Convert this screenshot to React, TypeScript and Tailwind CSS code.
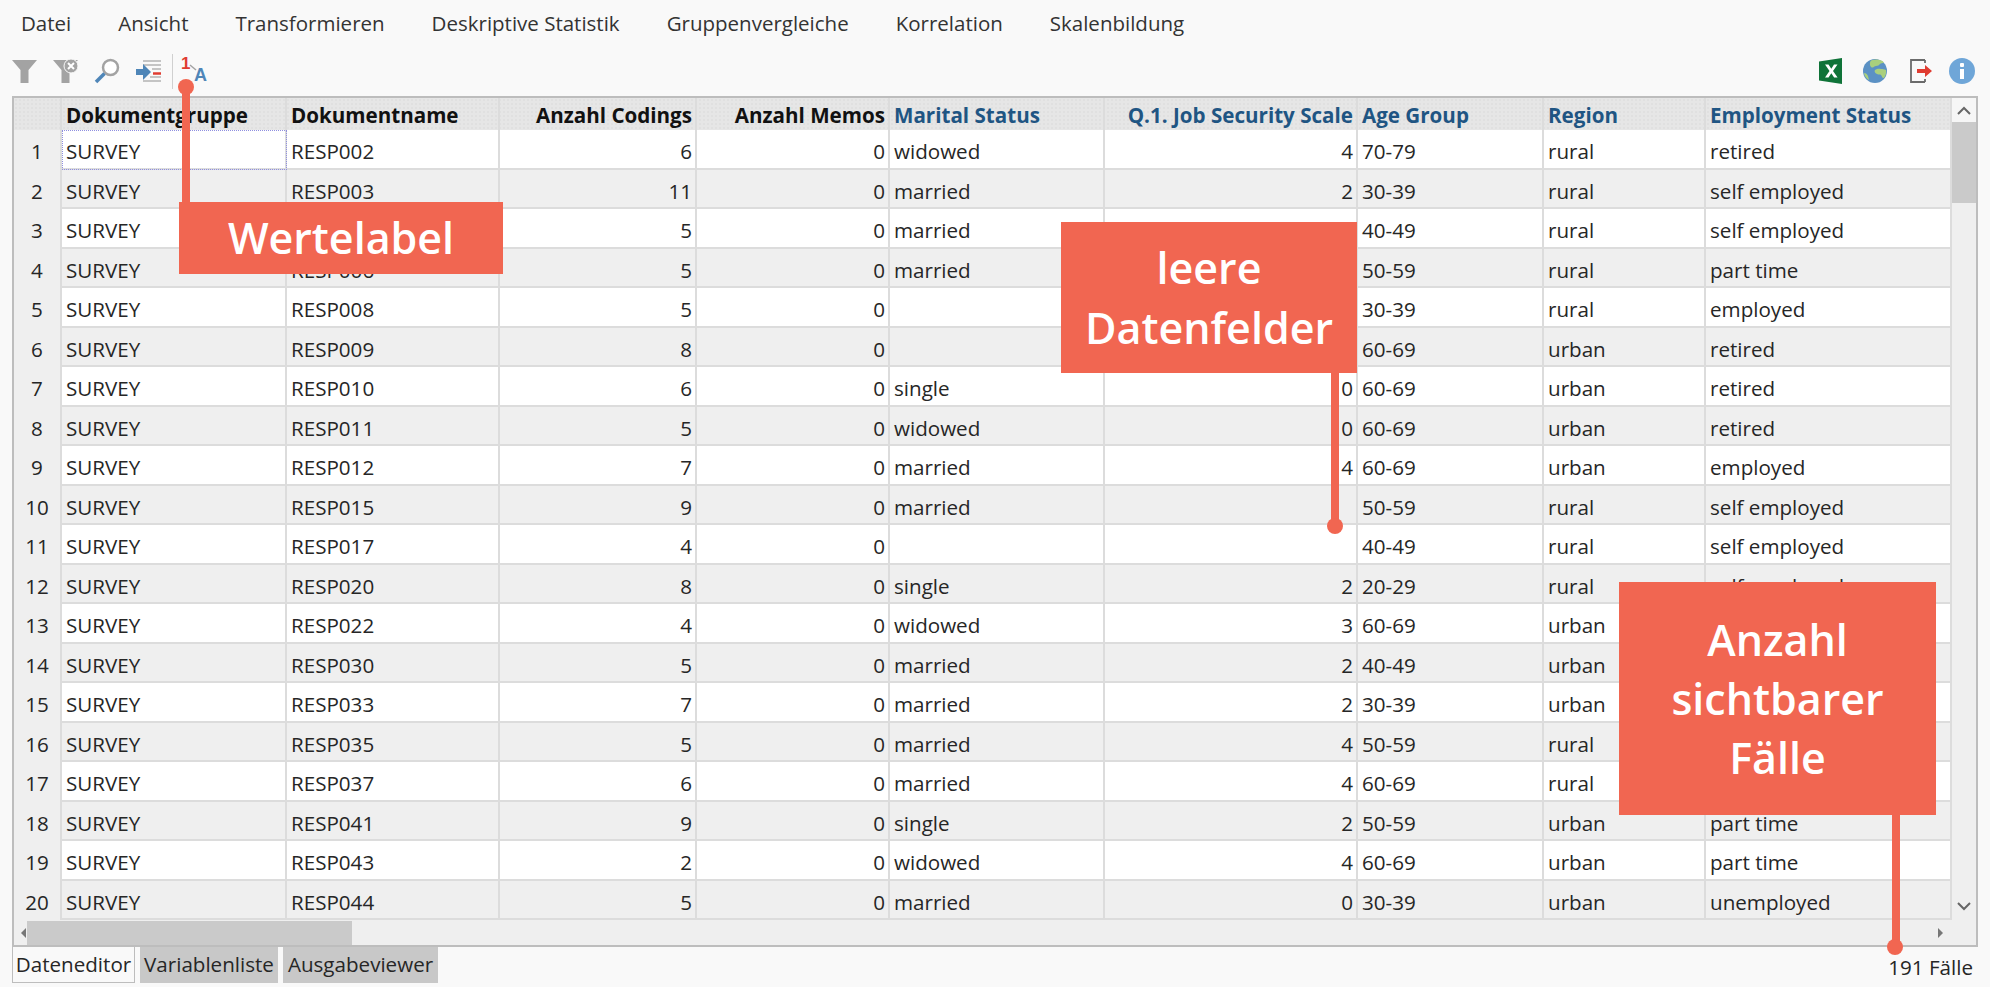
import React from 'react';

const font = { fontFamily: '"Open Sans", "Noto Sans", sans-serif' };

const menu = ['Datei', 'Ansicht', 'Transformieren', 'Deskriptive Statistik', 'Gruppenvergleiche', 'Korrelation', 'Skalenbildung'];

const columns = [
  { label: 'Dokumentgruppe', width: 'w-[225px]', right: false, blue: false },
  { label: 'Dokumentname', width: 'w-[213px]', right: false, blue: false },
  { label: 'Anzahl Codings', width: 'w-[197px]', right: true, blue: false },
  { label: 'Anzahl Memos', width: 'w-[193px]', right: true, blue: false },
  { label: 'Marital Status', width: 'w-[215px]', right: false, blue: true },
  { label: 'Q.1. Job Security Scale', width: 'w-[253px]', right: true, blue: true },
  { label: 'Age Group', width: 'w-[186px]', right: false, blue: true },
  { label: 'Region', width: 'w-[162px]', right: false, blue: true },
  { label: 'Employment Status', width: 'w-[246px]', right: false, blue: true },
];

const rows = [
  ['SURVEY', 'RESP002', '6', '0', 'widowed', '4', '70-79', 'rural', 'retired'],
  ['SURVEY', 'RESP003', '11', '0', 'married', '2', '30-39', 'rural', 'self employed'],
  ['SURVEY', 'RESP005', '5', '0', 'married', '', '40-49', 'rural', 'self employed'],
  ['SURVEY', 'RESP006', '5', '0', 'married', '', '50-59', 'rural', 'part time'],
  ['SURVEY', 'RESP008', '5', '0', '', '', '30-39', 'rural', 'employed'],
  ['SURVEY', 'RESP009', '8', '0', '', '', '60-69', 'urban', 'retired'],
  ['SURVEY', 'RESP010', '6', '0', 'single', '0', '60-69', 'urban', 'retired'],
  ['SURVEY', 'RESP011', '5', '0', 'widowed', '0', '60-69', 'urban', 'retired'],
  ['SURVEY', 'RESP012', '7', '0', 'married', '4', '60-69', 'urban', 'employed'],
  ['SURVEY', 'RESP015', '9', '0', 'married', '', '50-59', 'rural', 'self employed'],
  ['SURVEY', 'RESP017', '4', '0', '', '', '40-49', 'rural', 'self employed'],
  ['SURVEY', 'RESP020', '8', '0', 'single', '2', '20-29', 'rural', 'self employed'],
  ['SURVEY', 'RESP022', '4', '0', 'widowed', '3', '60-69', 'urban', 'retired'],
  ['SURVEY', 'RESP030', '5', '0', 'married', '2', '40-49', 'urban', 'retired'],
  ['SURVEY', 'RESP033', '7', '0', 'married', '2', '30-39', 'urban', 'employed'],
  ['SURVEY', 'RESP035', '5', '0', 'married', '4', '50-59', 'rural', 'employed'],
  ['SURVEY', 'RESP037', '6', '0', 'married', '4', '60-69', 'rural', 'retired'],
  ['SURVEY', 'RESP041', '9', '0', 'single', '2', '50-59', 'urban', 'part time'],
  ['SURVEY', 'RESP043', '2', '0', 'widowed', '4', '60-69', 'urban', 'part time'],
  ['SURVEY', 'RESP044', '5', '0', 'married', '0', '30-39', 'urban', 'unemployed'],
];

const Funnel = ({ clear }: { clear?: boolean }) => (
  <svg width="25" height="25" viewBox="0 0 25 25">
    <path d="M0 1h25l-8.500 10v13h-8v-13z" fill="#a3a3a3" />
    {clear && (
      <>
        <circle cx="18" cy="7" r="7" fill="#a3a3a3" stroke="#f9f9f9" strokeWidth="1" />
        <path d="M15 4l6 6M21 4l-6 6" stroke="#fff" strokeWidth="2" />
      </>
    )}
  </svg>
);

const Magnifier = () => (
  <svg width="26" height="26" viewBox="0 0 26 26">
    <circle cx="16.500" cy="9.500" r="7.500" fill="#fff" stroke="#a3a3a3" strokeWidth="2.500" />
    <path d="M10.500 15.500l-8.500 8.500" stroke="#4f86b8" strokeWidth="3.500" />
  </svg>
);

const Outdent = () => (
  <svg width="26" height="24" viewBox="0 0 26 24">
    <path d="M7 2h18M7 6h18M14 18h11M7 22h18M16 10h9" stroke="#c4c4c4" strokeWidth="2" />
    <path d="M17 14.500h8" stroke="#e03c31" strokeWidth="2.500" />
    <path d="M0 10h7V5l8 8-8 8v-5H0z" fill="#4f86b8" />
  </svg>
);

const ValueLabel = () => (
  <svg width="30" height="34" viewBox="0 0 30 34" style={{ fontFamily: '"Liberation Sans", sans-serif' }}>
    <text x="0" y="15" fontSize="17" fontWeight="700" fill="#e03c31">1</text>
    <path d="M9 11l6 5" stroke="#a3a3a3" strokeWidth="1.500" />
    <text x="13" y="26.500" fontSize="18" fontWeight="700" fill="#4f86b8">A</text>
  </svg>
);

const Excel = () => (
  <svg width="24" height="26" viewBox="0 0 24 26">
    <path d="M0 3.500L23 0v26L0 22.500z" fill="#0f7338" />
    <path d="M6 6.500l4.500 6.500L6 19.500h3.500l2.800-4.300 2.800 4.300h3.500L14 13l4.500-6.500H15l-2.700 4.200-2.800-4.200z" fill="#fff" />
  </svg>
);

const Globe = () => (
  <svg width="24" height="24" viewBox="0 0 24 24">
    <circle cx="12" cy="12" r="12" fill="#5b91c4" />
    <path d="M8 1.500C12 0 18 0 21 3.500c-2 1-3 .5-4 1.500s-2 2-4 2-2 2-4 1.500S6 4 8 1.500zM12 11c2-1.500 4-1.500 6-1 1.500 0 3 0 5 1 .5 3-.5 6-2 8-2 .5-2-2-3-3s-2 0-4-1-3-2.500-2-4zM1 14c2 0 3 1 4 3l1 4C3 19.500 1.500 17 1 14z" fill="#a9cf7d" />
  </svg>
);

const Exit = () => (
  <svg width="22" height="24" viewBox="0 0 22 24">
    <path d="M15 1H1v22h14M15 1v3M15 20v3" fill="none" stroke="#6b6b6b" strokeWidth="1.800" />
    <path d="M7 10h8V6l7 6-7 6v-4H7z" fill="#e03c31" />
  </svg>
);

const Info = () => (
  <svg width="26" height="26" viewBox="0 0 26 26">
    <circle cx="13" cy="13" r="13" fill="#6fa6d8" />
    <rect x="11" y="5" width="4" height="4" rx="1" fill="#fff" />
    <rect x="11" y="11" width="4" height="10" fill="#fff" />
  </svg>
);

const Chevron = ({ up }: { up?: boolean }) => (
  <svg width="14" height="9" viewBox="0 0 14 9">
    <path d={up ? 'M1 8l6-6 6 6' : 'M1 1l6 6 6-6'} fill="none" stroke="#666" strokeWidth="2" />
  </svg>
);

const Callout = ({ box, lines }: { box: string; lines: string[] }) => (
  <div className={`absolute flex flex-col items-center justify-center bg-[#f16651] text-[43px] font-semibold text-white ${box}`}>
    {lines.map(line => (
      <span key={line}>{line}</span>
    ))}
  </div>
);

const App: React.FC = () => {
  return (
    <div className="relative h-[987px] w-[1990px] overflow-hidden bg-[#f9f9f9] text-[#262626]" style={font}>
      <nav className="flex h-[46px] items-center gap-[47px] pl-[21px] text-[20.500px] text-[#333]">
        {menu.map(item => (
          <span key={item}>{item}</span>
        ))}
      </nav>

      <div className="flex h-[50px] items-center pl-[12px] pr-[15px]">
        <div className="flex items-center gap-[16px]">
          <Funnel />
          <Funnel clear />
          <Magnifier />
          <Outdent />
        </div>
        <div className="ml-[10px] h-[35px] w-px bg-[#d0d0d0]" />
        <div className="ml-[8px]">
          <ValueLabel />
        </div>
        <div className="ml-auto flex items-center">
          <Excel />
          <div className="ml-[20px]">
            <Globe />
          </div>
          <div className="ml-[23px]">
            <Exit />
          </div>
          <div className="ml-[17px]">
            <Info />
          </div>
        </div>
      </div>

      <div className="mx-[12px] flex h-[851px] w-[1966px] flex-col border-2 border-[#bdbdbd] bg-[#efefef]">
        <div className="flex h-[822px]">
          <div className="w-[1938px]">
            <div className="flex h-[32px] bg-[#e6e6e6] bg-[radial-gradient(#e0e0e0_1px,transparent_1px)] bg-[length:4px_4px] text-[20.600px] font-bold leading-[35px] text-[#111]">
              <div className="w-[48px] border-r-2 border-[#dcdcdc]" />
              {columns.map(col => (
                <div
                  key={col.label}
                  className={`${col.width} whitespace-nowrap border-r-2 border-[#dcdcdc] pl-[4px] pr-[3px] ${col.right ? 'text-right' : ''} ${col.blue ? 'text-[#1f5583]' : ''}`}
                >
                  {col.label}
                </div>
              ))}
            </div>
            {rows.map((row, r) => (
              <div
                key={r}
                className={`flex h-[39.5px] text-[20.600px] leading-[42px] ${r % 2 === 0 ? 'bg-white' : 'bg-[#efefef]'}`}
              >
                <div className="w-[48px] border-r-2 border-[#dcdcdc] bg-[#efefef] text-center">{r + 1}</div>
                {row.map((cell, c) => (
                  <div
                    key={c}
                    className={`${columns[c].width} whitespace-nowrap border-b-2 border-r-2 border-[#dcdcdc] pl-[4px] pr-[3px] ${columns[c].right ? 'text-right' : ''} ${r === 0 && c === 0 ? 'outline-dotted outline-1 -outline-offset-1 outline-[#8f8fe0]' : ''}`}
                  >
                    {cell}
                  </div>
                ))}
              </div>
            ))}
          </div>
          <div className="flex w-[24px] flex-col items-center bg-[#efefef]">
            <div className="flex h-[24px] w-full items-center justify-center bg-[#f6f6f6]">
              <Chevron up />
            </div>
            <div className="h-[81px] w-[24px] bg-[#cacaca]" />
            <div className="mt-auto flex h-[28px] items-center">
              <Chevron />
            </div>
          </div>
        </div>
        <div className="flex h-[25px] items-center bg-[#efefef] pl-[7px] pr-[33px]">
          <div className="h-0 w-0 border-y-[5px] border-r-[5px] border-y-transparent border-r-[#777]" />
          <div className="ml-[1px] h-[24px] w-[325px] bg-[#cacaca]" />
          <div className="ml-auto h-0 w-0 border-y-[5px] border-l-[5px] border-y-transparent border-l-[#777]" />
        </div>
      </div>

      <div className="flex h-[40px] items-start pl-[12px] pr-[17px] text-[20.600px] leading-[35px]">
        <div className="h-[36px] w-[123px] border border-t-0 border-[#bdbdbd] bg-[#f9f9f9] text-center">Dateneditor</div>
        <div className="ml-[5px] h-[36px] w-[138px] bg-[#c8c8c8] text-center">Variablenliste</div>
        <div className="ml-[5px] h-[36px] w-[155px] bg-[#c8c8c8] text-center">Ausgabeviewer</div>
        <div className="ml-auto leading-[40px]">191 Fälle</div>
      </div>

      <div className="absolute left-[182px] top-[87px] h-[120px] w-[8px] bg-[#f16651]" />
      <div className="absolute left-[178px] top-[79px] size-[16px] rounded-full bg-[#f16651]" />
      <Callout box="left-[179px] top-[202px] h-[72px] w-[324px]" lines={['Wertelabel']} />

      <div className="absolute left-[1331px] top-[370px] h-[156px] w-[8px] bg-[#f16651]" />
      <div className="absolute left-[1327px] top-[518px] size-[16px] rounded-full bg-[#f16651]" />
      <Callout box="left-[1061px] top-[222px] h-[151px] w-[296px] leading-[60px]" lines={['leere', 'Datenfelder']} />

      <div className="absolute left-[1892px] top-[810px] h-[137px] w-[8px] bg-[#f16651]" />
      <div className="absolute left-[1887px] top-[939px] size-[16px] rounded-full bg-[#f16651]" />
      <Callout box="left-[1619px] top-[582px] h-[233px] w-[317px] leading-[59px]" lines={['Anzahl', 'sichtbarer', 'Fälle']} />
    </div>
  );
};

export default App;
